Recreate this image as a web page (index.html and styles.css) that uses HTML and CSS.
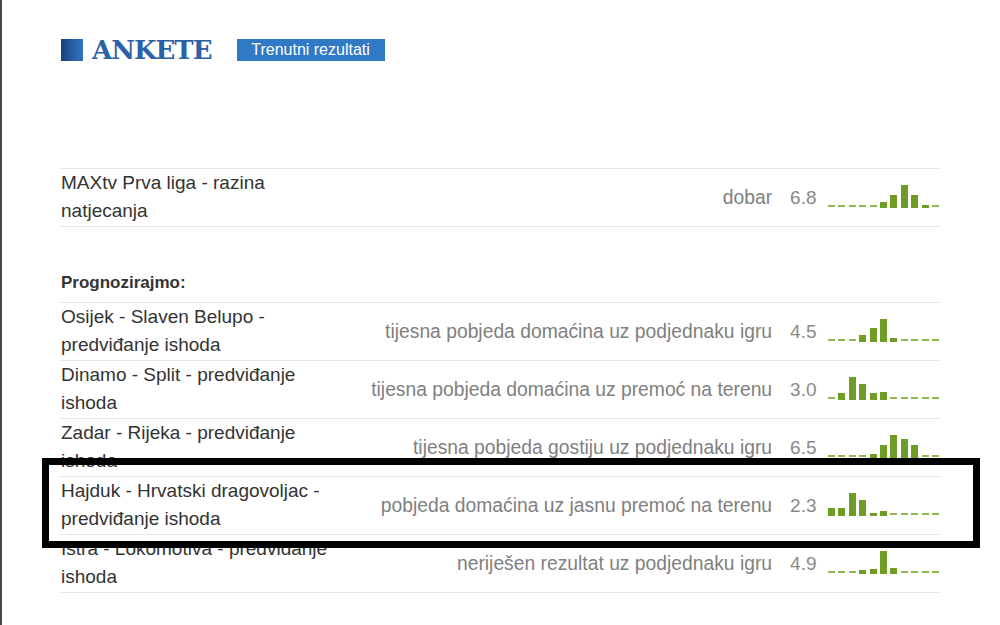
FILE: index.html
```html
<!DOCTYPE html>
<html lang="hr">
<head>
<meta charset="utf-8">
<title>Ankete</title>
<link rel="stylesheet" href="styles.css">
</head>
<body>
<div class="page">
  <header class="head">
    <span class="head-square"></span>
    <h1 class="head-title">ANKETE</h1>
    <a class="head-btn" href="#">Trenutni rezultati</a>
  </header>

  <section class="polls first">
    <div class="row">
      <div class="title">MAXtv Prva liga - razina natjecanja</div>
      <div class="answer">dobar</div>
      <div class="score">6.8</div>
      <div class="chart">
        <i class="dash"></i><i class="dash"></i><i class="dash"></i><i class="dash"></i><i class="dash"></i>
        <i class="bar" style="height:6px"></i><i class="bar" style="height:13px"></i><i class="bar" style="height:23px"></i><i class="bar" style="height:13px"></i><i class="bar" style="height:3px"></i><i class="dash"></i>
      </div>
    </div>
  </section>

  <h2 class="group">Prognozirajmo:</h2>

  <section class="polls">
    <div class="row">
      <div class="title">Osijek - Slaven Belupo - predviđanje ishoda</div>
      <div class="answer">tijesna pobjeda domaćina uz podjednaku igru</div>
      <div class="score">4.5</div>
      <div class="chart">
        <i class="dash"></i><i class="dash"></i><i class="dash"></i>
        <i class="bar" style="height:7px"></i><i class="bar" style="height:14px"></i><i class="bar" style="height:23px"></i><i class="bar" style="height:4px"></i>
        <i class="dash"></i><i class="dash"></i><i class="dash"></i><i class="dash"></i>
      </div>
    </div>
    <div class="row">
      <div class="title">Dinamo - Split - predviđanje ishoda</div>
      <div class="answer">tijesna pobjeda domaćina uz premoć na terenu</div>
      <div class="score">3.0</div>
      <div class="chart">
        <i class="dash"></i>
        <i class="bar" style="height:7px"></i><i class="bar" style="height:23px"></i><i class="bar" style="height:16px"></i><i class="bar" style="height:7px"></i><i class="bar" style="height:8px"></i>
        <i class="dash"></i><i class="dash"></i><i class="dash"></i><i class="dash"></i><i class="dash"></i>
      </div>
    </div>
    <div class="row">
      <div class="title">Zadar - Rijeka - predviđanje ishoda</div>
      <div class="answer">tijesna pobjeda gostiju uz podjednaku igru</div>
      <div class="score">6.5</div>
      <div class="chart">
        <i class="dash"></i><i class="dash"></i><i class="dash"></i><i class="dash"></i>
        <i class="bar" style="height:4px"></i><i class="bar" style="height:13px"></i><i class="bar" style="height:23px"></i><i class="bar" style="height:19px"></i><i class="bar" style="height:13px"></i>
        <i class="dash"></i><i class="dash"></i>
      </div>
    </div>
    <div class="row">
      <div class="title">Hajduk - Hrvatski dragovoljac - predviđanje ishoda</div>
      <div class="answer">pobjeda domaćina uz jasnu premoć na terenu</div>
      <div class="score">2.3</div>
      <div class="chart">
        <i class="bar" style="height:8px"></i><i class="bar" style="height:8px"></i><i class="bar" style="height:23px"></i><i class="bar" style="height:16px"></i><i class="bar" style="height:3px"></i><i class="bar" style="height:5px"></i>
        <i class="dash"></i><i class="dash"></i><i class="dash"></i><i class="dash"></i><i class="dash"></i>
      </div>
    </div>
    <div class="row">
      <div class="title">Istra - Lokomotiva - predviđanje ishoda</div>
      <div class="answer">neriješen rezultat uz podjednaku igru</div>
      <div class="score">4.9</div>
      <div class="chart">
        <i class="dash"></i><i class="dash"></i><i class="dash"></i>
        <i class="bar" style="height:4px"></i><i class="bar" style="height:5px"></i><i class="bar" style="height:23px"></i><i class="bar" style="height:6px"></i>
        <i class="dash"></i><i class="dash"></i><i class="dash"></i><i class="dash"></i>
      </div>
    </div>
  </section>

  <div class="highlight"></div>
</div>
</body>
</html>
```

FILE: styles.css
```css
html, body {
  margin: 0;
  padding: 0;
  background: #fff;
}

body {
  font-family: "Liberation Sans", Arial, sans-serif;
  border-left: 2px solid #4a4a4a;
  min-height: 625px;
  box-sizing: border-box;
}

.page {
  position: relative;
  width: 880px;
  margin-left: 58px;
  padding-top: 39px;
}

.head {
  display: flex;
  align-items: center;
  height: 22px;
  padding-left: 1px;
}

.head-square {
  width: 22px;
  height: 22px;
  background: linear-gradient(90deg, #163f78 0%, #2a63ab 60%, #3473bd 100%);
}

.head-title {
  margin: 0 0 0 9px;
  font-family: "DejaVu Serif", "Liberation Serif", serif;
  font-weight: bold;
  font-size: 26px;
  line-height: 22px;
  color: #2c61a7;
  letter-spacing: -1px;
}

.head-btn {
  margin-left: 25px;
  width: 148px;
  height: 22px;
  background: #2f79c5;
  color: #fff;
  font-size: 16px;
  line-height: 22px;
  text-align: center;
  text-decoration: none;
}

.polls {
  border-bottom: 1px solid #e6e6e6;
}

.polls.first {
  margin-top: 107px;
}

.row {
  display: flex;
  align-items: center;
  height: 57px;
  border-top: 1px solid #e6e6e6;
  font-size: 19px;
}

.title {
  width: 280px;
  padding-left: 1px;
  line-height: 28px;
  color: #333;
  align-self: flex-start;
}

.answer {
  flex: 1;
  text-align: right;
  color: #808080;
  font-size: 19.3px;
}

.score {
  margin-left: 18px;
  width: 27px;
  color: #8a8a8a;
}

.chart {
  display: flex;
  align-items: flex-end;
  gap: 3.4px;
  margin-left: 11px;
  margin-right: 1px;
  height: 24px;
  margin-bottom: 4px;
}

.chart i {
  display: block;
  width: 7px;
}

.chart .dash {
  height: 2px;
  margin-bottom: 1px;
  background: #93b851;
}

.chart .bar {
  background: #6e9c24;
}

.group {
  margin: 46px 0 9px;
  padding-left: 1px;
  font-size: 17px;
  line-height: 20px;
  font-weight: bold;
  color: #333;
}

.highlight {
  position: absolute;
  left: -18px;
  top: 458px;
  width: 938px;
  height: 90px;
  border: 7px solid #000;
  box-sizing: border-box;
}
```
